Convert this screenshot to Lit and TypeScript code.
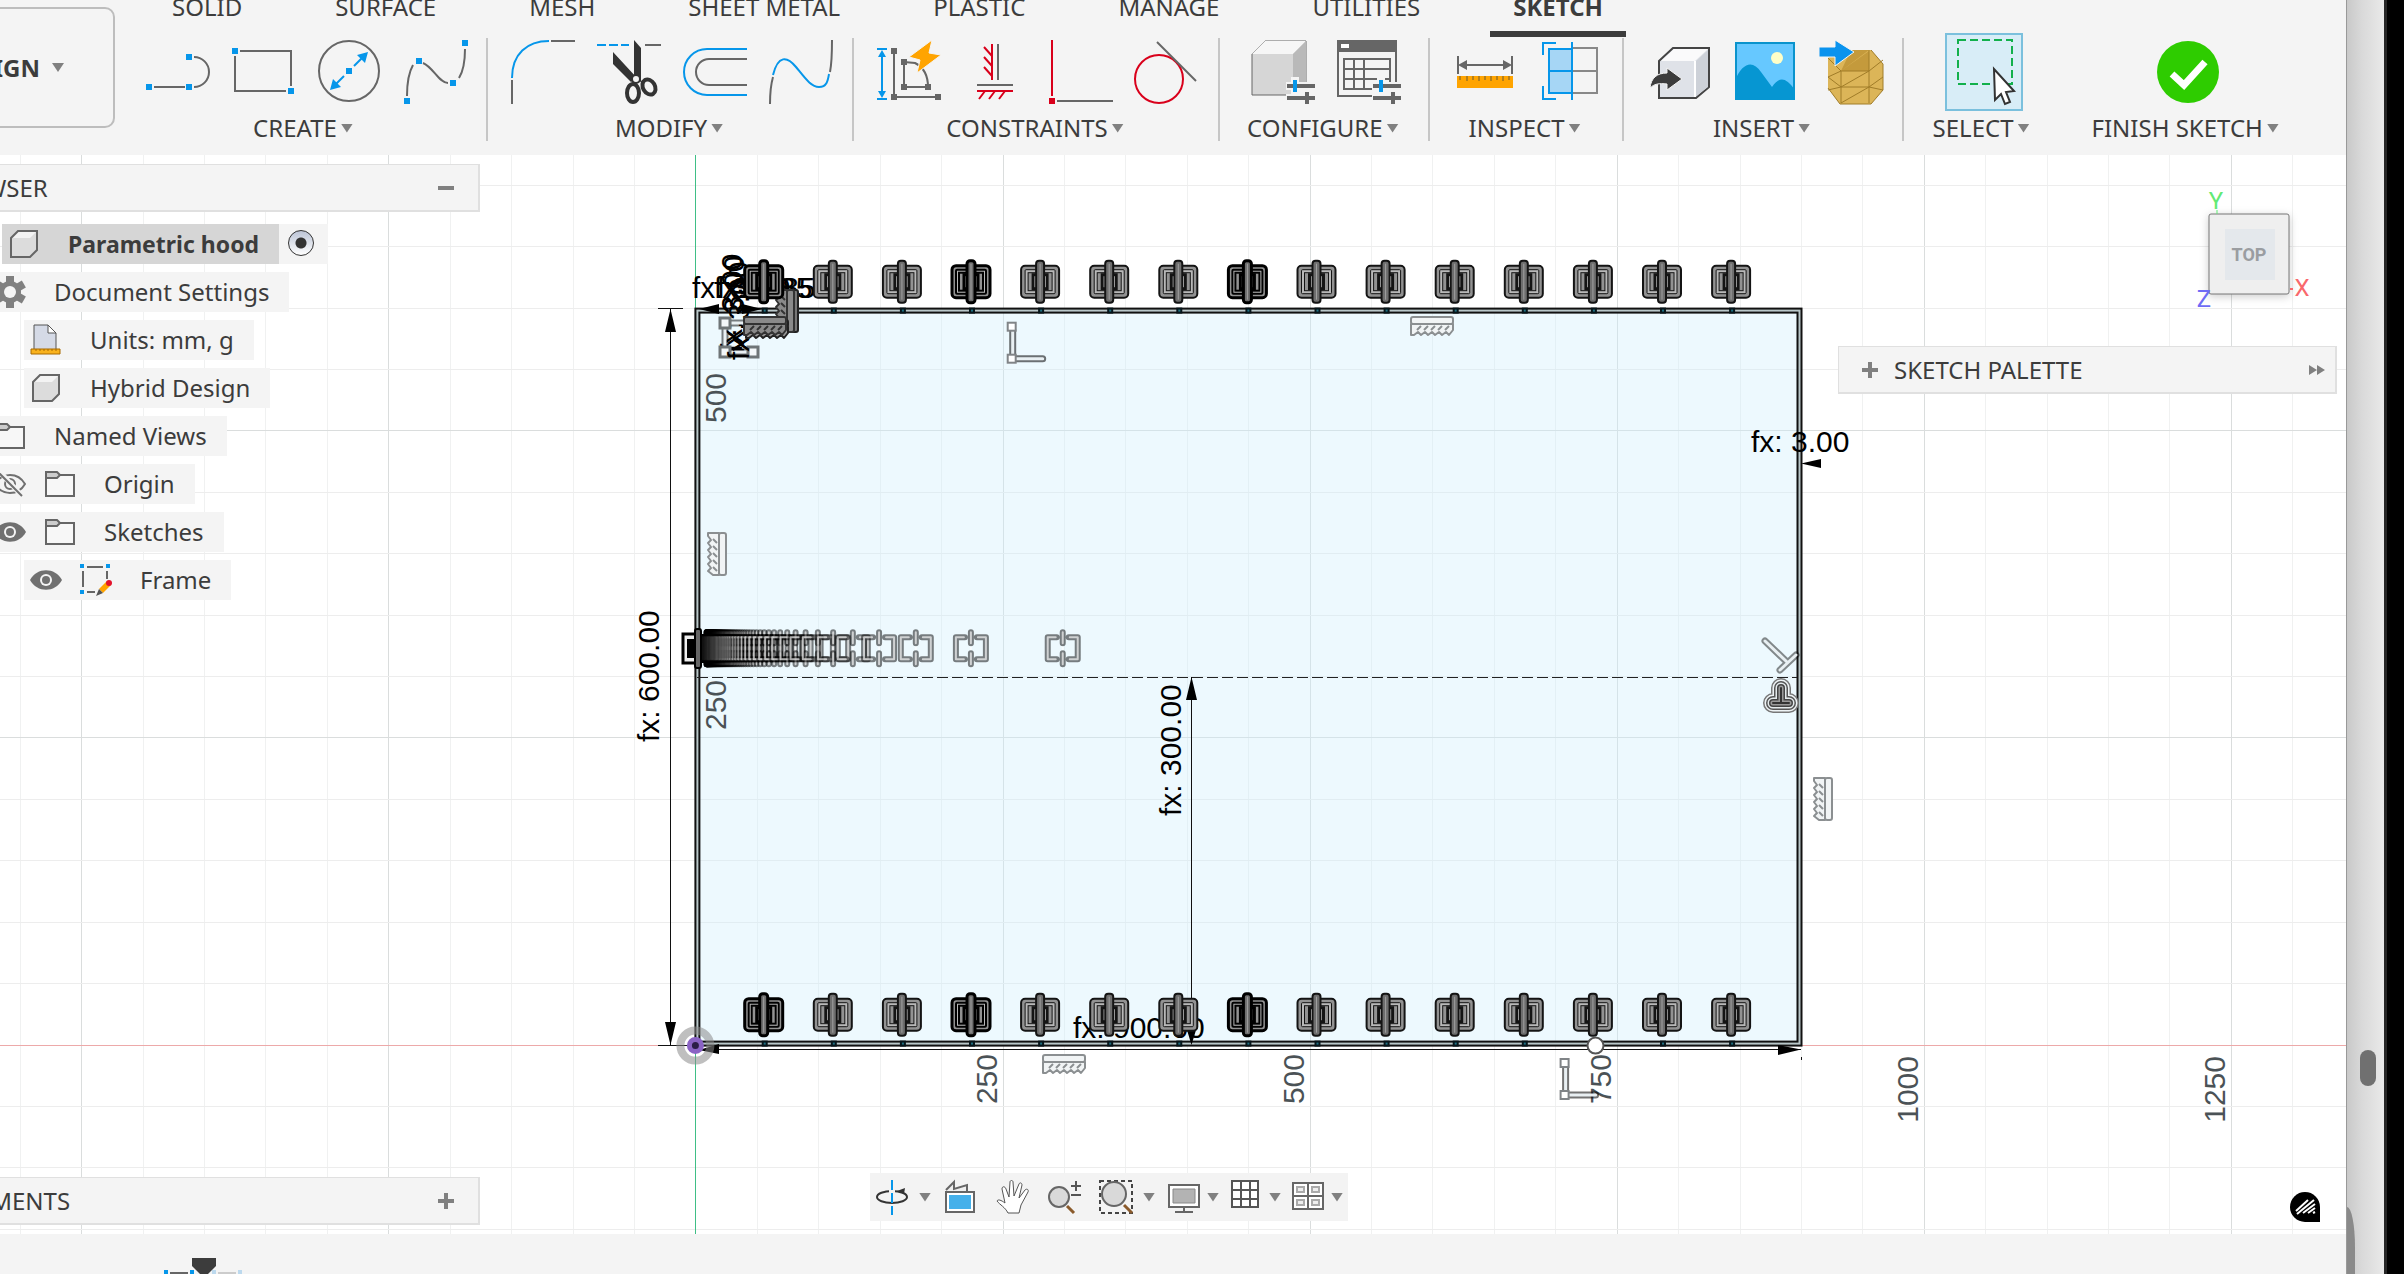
import { LitElement, html, svg, css, TemplateResult, SVGTemplateResult } from "lit";
import { customElement, property, state } from "lit/decorators.js";
import { classMap } from "lit/directives/class-map.js";

const GRAY = "#666";
const BLUE = "#0696ea";
const RED = "#d9001b";

const node = (x: number, y: number, color = BLUE, s = 6) =>
  svg`<rect x=${x - s / 2} y=${y - s / 2} width=${s} height=${s} fill=${color} />`;

const slider = (x: number, y: number) => svg`
  <path d=${`M${x - 9} ${y}h30M${x - 9} ${y + 12}h30`} stroke="#f4f4f4" stroke-width="8" />
  <path d=${`M${x} ${y - 9}v18M${x + 13} ${y + 3}v18`} stroke="#f4f4f4" stroke-width="8" />
  <path d=${`M${x - 8} ${y}h28M${x - 8} ${y + 12}h28`} stroke=${GRAY} stroke-width="4" />
  <path d=${`M${x + 12} ${y + 6}v12`} stroke=${GRAY} stroke-width="4" />
  <path d=${`M${x} ${y - 6}v12`} stroke=${BLUE} stroke-width="4" />`;

const TOOL_ICONS: Record<string, SVGTemplateResult> = {
  line: svg`<path d="M9 47H40M49 17A15 15 0 0 1 49 47" fill="none" stroke=${GRAY} stroke-width="2" />
    ${node(4, 47)}${node(44, 17)}${node(44, 47)}`,
  rectangle: svg`<path d="M9 11H60V46M55 51H4V16" fill="none" stroke=${GRAY} stroke-width="2" />
    ${node(4, 11)}${node(60, 51)}`,
  circle: svg`<circle cx="32" cy="31" r="30" fill="none" stroke=${GRAY} stroke-width="2" />
    <path d="M37 26L45 18M27 36L19 44" stroke=${BLUE} stroke-width="2" />
    <path d="M51 12L48 23L40 15ZM13 50L16 39L24 47Z" fill=${BLUE} />${node(32, 31)}`,
  spline: svg`<path d="M4 56C4 42 6 32 10 25M20 23C30 27 36 43 45 43M56 38C61 30 62 20 62 9" fill="none" stroke=${GRAY} stroke-width="2" />
    ${node(4, 61)}${node(16, 21)}${node(50, 43)}${node(62, 3)}`,
  fillet: svg`<path d="M1 38C1 14 16 1 38 1" fill="none" stroke=${BLUE} stroke-width="2" />
    <path d="M1 40V64M40 1H64" stroke=${GRAY} stroke-width="2" />`,
  trim: svg`<path d="M0 5H32" stroke=${BLUE} stroke-width="2" stroke-dasharray="9 3" />
    <path d="M48 5H64" stroke=${GRAY} stroke-width="2" />
    <path d="M37 0L44 8V42L37 38ZM16 12L40 38L34 42L16 24Z" fill="#333" />
    <ellipse cx="36" cy="53" rx="6" ry="9" fill="none" stroke="#333" stroke-width="4" />
    <ellipse cx="52" cy="47" rx="6" ry="8" fill="none" stroke="#333" stroke-width="4" transform="rotate(-30 52 47)" />
    <circle cx="39" cy="39" r="4" fill="#f4f4f4" stroke="#333" stroke-width="2" />`,
  offset: svg`<path d="M64 9H24A23 23 0 0 0 24 55H64" fill="none" stroke=${BLUE} stroke-width="2" />
    <path d="M64 19H26A13 13 0 0 0 26 45H64" fill="none" stroke=${GRAY} stroke-width="2" />`,
  blend: svg`<path d="M4 35C9 15 18 16 27 27S42 47 50 47S59 40 60 34" fill="none" stroke=${BLUE} stroke-width="2" />
    <path d="M1 64C1 52 2 44 4 37M61 32C63 22 63 12 63 0" fill="none" stroke=${GRAY} stroke-width="2" />`,
  autoConstrain: svg`<path d="M5 12V56M0 9H10M0 59H10" stroke=${BLUE} stroke-width="2" />
    <path d="M5 10L9 17H1ZM5 58L9 51H1Z" fill=${BLUE} />
    <path d="M17 11V57H60M27 22V47H51C51 36 48 28 38 23L27 22" fill="none" stroke=${GRAY} stroke-width="2" />
    ${node(17, 11, GRAY)}${node(17, 57, GRAY)}${node(61, 57, GRAY)}${node(27, 22, GRAY)}${node(27, 47, GRAY)}${node(51, 47, GRAY)}
    <path d="M55 0L32 17L43 20L40 33L64 15L52 13Z" fill="#ffa400" stroke="#f4f4f4" stroke-width="1" />`,
  horizontal: svg`<path d="M29 4V40M21 7L29 16M21 17L29 26M21 27L29 36M14 51H50M22 51L16 59M32 51L26 59M42 51L36 59" stroke=${RED} stroke-width="2" />
    <path d="M35 4V40M14 45H50" stroke=${GRAY} stroke-width="2" />`,
  coincident: svg`<path d="M3 0V56" stroke=${RED} stroke-width="2" /><path d="M8 61H64" stroke=${GRAY} stroke-width="2" />${node(3, 61, RED)}`,
  tangent: svg`<circle cx="24" cy="39" r="24" fill="none" stroke=${RED} stroke-width="2" />
    <path d="M22 2L61 41" stroke=${GRAY} stroke-width="2" />`,
  configure: svg`<path d="M1 14L14 1H55V43L42 55H1Z" fill="#d6d6d6" stroke=${GRAY} stroke-width="1" />
    <path d="M1 14L14 1H55L42 14Z" fill="#f6f6f6" /><path d="M42 14L55 1V43L42 55Z" fill="#b9b9b9" />${slider(44, 46)}`,
  configureTable: svg`<path d="M1 1H59V56H1Z" fill="#f4f4f4" stroke=${GRAY} stroke-width="2" />
    <path d="M0 0H60V12H0Z" fill=${GRAY} /><path d="M4 4H12V8H4Z" fill="#fff" />
    <path d="M7 19H53V49H7ZM7 29H53M7 39H53M17 19V49M27 19V49" fill="none" stroke=${GRAY} stroke-width="2" />${slider(44, 46)}`,
  measure: svg`<path d="M5 16V34M59 16V34M9 25H55" stroke=${GRAY} stroke-width="2" />
    <path d="M5 25L14 20V30ZM59 25L50 20V30Z" fill=${GRAY} />
    <path d="M4 36H60V48H4Z" fill="#ffa400" /><path d="M7 36V40M14 36V41M20 36V40M26 36V41M32 36V40M38 36V41M44 36V40M50 36V41M56 36V40" stroke="#6b5b30" stroke-width="1" />`,
  section: svg`<path d="M33 8H58V53H33M33 31H58" fill="none" stroke="#888" stroke-width="2" />
    <path d="M10 9H33V53H10Z" fill="#a6d6f5" stroke=${BLUE} stroke-width="2" />
    <path d="M10 31H33M33 2V60M17 3H4V15M17 59H4V46" fill="none" stroke=${BLUE} stroke-width="2" />`,
  derive: svg`<path d="M12 21L26 8H62V47L49 58H12Z" fill="#dfe2e8" stroke="#444" stroke-width="2" />
    <path d="M14 21L27 9H61L48 21Z" fill="#fafafb" /><path d="M48 22L61 10V47L48 57Z" fill="#cdd1d8" />
    <path d="M48 21V57" stroke="#fff" stroke-width="2" />
    <path d="M3 48C4 38 10 33 20 33V28L35 39L20 50V44C12 43 7 44 3 48Z" fill="#3c3c3c" stroke="#f4f4f4" stroke-width="1" />`,
  canvas: svg`<path d="M3 3H61V59H3Z" fill="#66c8ff" stroke="#0a93cc" stroke-width="2" />
    <circle cx="44" cy="18" r="6" fill="#ffffc8" /><path d="M2 40C10 22 20 20 28 32L39 47C46 37 52 36 62 50V60H2Z" fill="#0696d2" />`,
  mesh: svg`<path d="M9 18L20 10H52L64 24V50L52 64H21L9 48Z" fill="#dcb558" />
    <path d="M22 31L50 11V31Z M22 31L32 10H50Z" fill="#c49a3c" />
    <path d="M9 18L22 31H50L64 20M50 10V31L22 47M22 31V47H50L22 63M50 31V47L64 37M9 37L22 31M9 37L22 47L9 50M22 47V63M50 47V63M50 47L64 50M9 48L21 64H52L64 50V24L52 10" fill="none" stroke="#a07c28" stroke-width="1" />
    <path d="M0 7H16V0L35 12L16 26V17H0Z" fill="#0a93ee" stroke="#f4f4f4" stroke-width="1" />`,
  select: svg`<path d="M6 0H60V44H6Z" fill="none" stroke="#12b04c" stroke-width="2" stroke-dasharray="8 4" />
    <path d="M42 29L43 60L49 54L53 64L58 62L54 52L62 51Z" fill="#fff" stroke="#333" stroke-width="2" />`,
  finish: svg`<circle cx="32" cy="32" r="31" fill="#2ecc00" />
    <path d="M16 34L28 45L49 22" fill="none" stroke="#fff" stroke-width="7" />`,
};

const CUBE = svg`<path d="M3 10L10 3H29V22L22 29H3Z" fill="#dcdcdc" stroke="#666" stroke-width="2" />
  <path d="M5 10L11 4H28L22 10Z" fill="#f3f3f3" />`;
const FOLDER = svg`<path d="M2 7H30V28H2Z" fill="#f7f7f7" stroke="#666" stroke-width="2" />
  <path d="M2 4H13L16 7L13 10H2Z" fill="#ccc" stroke="#666" stroke-width="2" />`;
const EYE = svg`<path d="M0 16C7 3 25 3 32 16C25 29 7 29 0 16Z" fill="#707070" />
  <circle cx="16" cy="16" r="6" fill="#f4f4f4" /><circle cx="16" cy="16" r="4" fill="#707070" />`;

const TREE_ICONS: Record<string, SVGTemplateResult> = {
  cube: CUBE,
  folder: FOLDER,
  eye: EYE,
  eyeOff: svg`<path d="M1 16C8 4 24 4 31 16C24 28 8 28 1 16Z" fill="none" stroke="#707070" stroke-width="2" />
    <circle cx="16" cy="16" r="5" fill="none" stroke="#707070" stroke-width="2" />
    <path d="M5 3L29 29" stroke="#f4f4f4" stroke-width="5" /><path d="M4 4L28 28" stroke="#707070" stroke-width="2" />`,
  gear: svg`<g fill="#808080"><circle cx="16" cy="16" r="11" />
    ${[0, 60, 120].map((a) => svg`<rect x="12" y="0" width="8" height="32" transform=${`rotate(${a} 16 16)`} />`)}</g>
    <circle cx="16" cy="16" r="6" fill="#f4f4f4" />`,
  units: svg`<path d="M4 1H18L26 9V26H4Z" fill="#d5dae6" stroke="#555" stroke-width="1" />
    <path d="M18 1V9H26Z" fill="#fff" stroke="#555" stroke-width="1" />
    <path d="M1 25H30V30H1Z" fill="#f9b21d" stroke="#a86a00" stroke-width="1" />
    <path d="M6 25v2M10 25v2M14 25v2M18 25v2M22 25v2M26 25v2" stroke="#a86a00" />`,
  sketch: svg`<path d="M7 3H23M3 7V23M27 7V15M7 28H15" stroke="#666" stroke-width="2" />
    ${node(2, 2, BLUE, 4)}${node(28, 2, BLUE, 4)}${node(2, 28, BLUE, 4)}
    <path d="M19 25L27 17L31 21L23 29Z" fill="#ffa400" /><path d="M19 25L23 29L16 32Z" fill="#555" />
    <circle cx="29" cy="19" r="3" fill="#e3122c" />`,
};

const NAV_ICONS: Record<string, SVGTemplateResult> = {
  orbit: svg`<ellipse cx="17" cy="18" rx="15" ry="6" fill="none" stroke="#333" stroke-width="2" />
    <path d="M17 9V15" stroke="#f3f3f3" stroke-width="6" /><path d="M17 1V36" stroke=${BLUE} stroke-width="2" stroke-dasharray="10 3" />
    <path d="M22 12L30 9L29 15Z" fill="#333" />`,
  lookAt: svg`<path d="M3 11L11 3V10L24 6V12" fill="#eee" stroke="#666" stroke-width="2" />
    <path d="M3 13H31V33H3Z" fill="#fff" stroke="#666" stroke-width="2" /><path d="M6 16H28V30H6Z" fill="#45b0ea" />`,
  pan: svg`<path d="M13 34C10 28 5 26 2 22C3 20 6 21 10 24L7 10C7 7 10 7 11 10L14 18L15 3C15 1 18 1 18 3L19 17L24 5C25 3 27 4 27 6L24 19L30 11C32 9 34 11 33 13L26 26L24 34Z" fill="#fff" stroke="#555" stroke-width="1" />`,
  zoom: svg`<circle cx="12" cy="18" r="10" fill="#d9d9d9" stroke="#666" stroke-width="2" />
    <path d="M20 27L27 34" stroke="#8a5a2b" stroke-width="3" /><path d="M24 7H34M29 2V12M24 16H34" stroke="#555" stroke-width="2" />`,
  zoomWindow: svg`<path d="M1 2H33V34H1Z" fill="none" stroke="#444" stroke-width="2" stroke-dasharray="4 3" />
    <circle cx="15" cy="15" r="12" fill="#d9d9d9" stroke="#666" stroke-width="2" /><path d="M25 26L33 34" stroke="#8a5a2b" stroke-width="3" />`,
  display: svg`<path d="M2 6H32V28H2Z" fill="#fff" stroke="#666" stroke-width="2" /><path d="M6 10H28V24H6Z" fill="#b3b3b3" stroke="#888" />
    <path d="M17 28V32M8 33H26" stroke="#666" stroke-width="2" />`,
  grid: svg`<path d="M3 2H29V28H3ZM3 11H29M3 20H29M12 2V28M21 2V28" fill="#fff" stroke="#555" stroke-width="2" />`,
  viewports: svg`<path d="M2 4H32V30H2ZM2 17H32M17 4V30" fill="#fff" stroke="#666" stroke-width="2" />
    <path d="M6 8H13V13H6ZM21 8H28V13H21ZM6 21H13V26H6ZM21 21H28V26H21Z" fill="#eee" stroke="#aaa" stroke-width="2" />`,
};

/* Sketch geometry, in pixels. The drawing is scaled at 307 px per 250 mm. */
const ORIGIN = { x: 695.4, y: 1045.6 };
const MINOR = 61.42;
const TOP = 155;
const FRAME = { left: 695.4, top: 308.6, right: 1801.5, bottom: 1045.6, wall: 4 };
const LOUVERS = Array.from({ length: 15 }, (_, i) => 763.7 + i * 69.1);
const DARK_LOUVERS = [0, 3, 7];

const outlined = (d: string, o = 0.5) => svg`
  <g fill="none" stroke-linecap="round" stroke-linejoin="round">
    <path d=${d} stroke="#000" stroke-opacity=${o} stroke-width="7" />
    <path d=${d} stroke="#e9f0f3" stroke-width="3" />
  </g>`;

const symmetry = (x: number, y: number) => svg`
  <g transform=${`translate(${x} ${y})`} fill="none" stroke-linejoin="round" stroke-linecap="round">
    <path d="M-6 -11H-15V11H-6M6 -11H15V11H6M0 -16V-5M0 5V16" stroke="#000" stroke-opacity=".5" stroke-width="6" />
    <path d="M-7 -11H-15V11H-7M7 -11H15V11H7M0 -16V-5M0 5V16M0 -1V1" stroke="#fff" stroke-opacity=".65" stroke-width="2" />
  </g>`;

const louver = (x: number, y: number, dark: boolean) => {
  const edge = dark ? "#000" : "#141414";
  return svg`<g transform=${`translate(${x} ${y})`} stroke=${edge}>
    <rect x="-19" y="-16" width="38" height="32" rx="4" fill="#929292" stroke-width=${dark ? 3 : 2} />
    <rect x="-15" y="-12" width="30" height="24" rx="1" fill="#b8b8b8" stroke-width=${dark ? 2 : 1} />
    <rect x="-12" y="-9" width="24" height="18" fill="#929292" stroke-width=${dark ? 2 : 1} />
    <rect x="-7" y="-7" width="14" height="14" fill="#fff" stroke-width="3" />
    <rect x="-4" y="-21" width="8" height="42" rx="3" fill="#6e6e6e" stroke-width=${dark ? 3 : 2} />
    <path d="M0 -18V18" stroke="#a0a0a0" stroke-width="1" />
  </g>`;
};

const hatch = (x: number, y: number, angle = 0, color = "#8b8f91", fill = "#f1f4f5") => svg`
  <g transform=${`translate(${x} ${y}) rotate(${angle})`} fill=${fill} stroke=${color} stroke-width="2" stroke-linejoin="round">
    <rect x="-21" y="-9" width="42" height="7" rx="2" />
    <path d="M-21 -2H21V4L17 9L14 6L10 9L7 6L3 9L0 6L-4 9L-7 6L-11 9L-14 6L-18 9L-21 9Z" />
    <path d="M-15 4L-11 0M-8 4L-4 0M-1 4L3 0M6 4L10 0M13 4L17 0" />
  </g>`;

const joint = (x: number, y: number) => svg`
  ${outlined(`M${x + 1} ${y + 3}V${y + 32}M${x} ${y + 32}H${x + 31}`, 0.55)}
  <rect x=${x - 4} y=${y - 4} width="8" height="8" fill="#fff" stroke="#808487" stroke-width="2" />
  <rect x=${x - 4} y=${y + 28} width="8" height="8" fill="#fff" stroke="#808487" stroke-width="2" />`;

const vtext = (label: string, x: number, y: number, cls = "dim", anchor = "start") =>
  svg`<text class=${cls} text-anchor=${anchor} transform=${`translate(${x} ${y}) rotate(-90)`}>${label}</text>`;

const shared = css`
  *, *::before, *::after { box-sizing: border-box; }
  button {
    font: inherit;
    color: inherit;
    background: none;
    border: 0;
    padding: 0;
    margin: 0;
    cursor: pointer;
  }
  svg { display: block; overflow: visible; }
  .caret {
    width: 12px;
    height: 9px;
    background: #808080;
    clip-path: polygon(0 0, 100% 0, 50% 100%);
  }
`;

type Tool = { id: string; label: string };
type Group = { name: string; tools: Tool[] };

const GROUPS: Group[] = [
  { name: "CREATE", tools: [{ id: "line", label: "Line" }, { id: "rectangle", label: "Rectangle" }, { id: "circle", label: "Circle" }, { id: "spline", label: "Spline" }] },
  { name: "MODIFY", tools: [{ id: "fillet", label: "Fillet" }, { id: "trim", label: "Trim" }, { id: "offset", label: "Offset" }, { id: "blend", label: "Blend curve" }] },
  { name: "CONSTRAINTS", tools: [{ id: "autoConstrain", label: "Auto constrain" }, { id: "horizontal", label: "Horizontal/Vertical" }, { id: "coincident", label: "Coincident" }, { id: "tangent", label: "Tangent" }] },
  { name: "CONFIGURE", tools: [{ id: "configure", label: "Configure model" }, { id: "configureTable", label: "Configuration table" }] },
  { name: "INSPECT", tools: [{ id: "measure", label: "Measure" }, { id: "section", label: "Section analysis" }] },
  { name: "INSERT", tools: [{ id: "derive", label: "Derive" }, { id: "canvas", label: "Canvas" }, { id: "mesh", label: "Insert mesh" }] },
  { name: "SELECT", tools: [{ id: "select", label: "Select" }] },
  { name: "FINISH SKETCH", tools: [{ id: "finish", label: "Finish sketch" }] },
];

const TABS = ["SOLID", "SURFACE", "MESH", "SHEET METAL", "PLASTIC", "MANAGE", "UTILITIES", "SKETCH"];

@customElement("ribbon-bar")
export class RibbonBar extends LitElement {
  @state() private tab = "SKETCH";
  @state() private tool = "select";

  static styles = [shared, css`
    :host {
      display: grid;
      grid-template-columns: 122px 1fr;
      height: 155px;
      flex: none;
      overflow: hidden;
      background: #f4f4f4;
      color: #3c3c3c;
      font: 24px/28px "Noto Sans", sans-serif;
      white-space: nowrap;
    }
    .workspace {
      display: flex;
      align-items: center;
      justify-content: flex-end;
      gap: 12px;
      height: 121px;
      margin: 7px 7px 0 -100px;
      padding-right: 49px;
      border: 2px solid #bdbdbd;
      border-radius: 10px;
      font-weight: 700;
    }
    .tabs { display: flex; gap: 47px; padding-left: 27px; height: 37px; margin: 0; }
    .tab {
      height: 46px;
      margin-top: -9px;
      padding: 0 23px 8px;
      line-height: 32px;
      border-bottom: 6px solid transparent;
    }
    .tab.active { font-weight: 700; border-color: #3c3c3c; }
    .ribbon { display: flex; padding-top: 1px; }
    .group {
      display: flex;
      flex-direction: column;
      align-items: center;
      gap: 10px;
      height: 103px;
      padding: 2px 19px 0 23px;
      border-right: 2px solid #c6c6c6;
    }
    .group.open { border-color: transparent; padding: 2px 21px 0 25px; }
    .tools { display: flex; gap: 22px; height: 64px; }
    .tool { width: 64px; height: 64px; }
    .tool.active {
      width: 78px;
      height: 78px;
      margin: -7px;
      padding: 5px;
      background: #d8edf7;
      border: 2px solid #7bc0dd;
    }
    .label { display: flex; align-items: center; gap: 4px; padding: 0 10px 0 4px; }
  `];

  render() {
    return html`
      <button class="workspace">DESIGN <span class="caret"></span></button>
      <div>
        <nav class="tabs" aria-label="Toolbar tabs">
          ${TABS.map((t) => html`<button class=${classMap({ tab: true, active: t === this.tab })} @click=${() => (this.tab = t)}>${t}</button>`)}
        </nav>
        <div class="ribbon">
          ${GROUPS.map((g, i) => html`
            <section class=${classMap({ group: true, open: i >= GROUPS.length - 2 })}>
              <div class="tools">
                ${g.tools.map((t) => html`
                  <button class=${classMap({ tool: true, active: t.id === this.tool })} aria-label=${t.label} @click=${() => (this.tool = t.id)}>
                    <svg width="64" height="64" viewBox="0 0 64 64">${TOOL_ICONS[t.id]}</svg>
                  </button>`)}
              </div>
              <button class="label">${g.name}<span class="caret"></span></button>
            </section>`)}
        </div>
      </div>`;
  }
}

type Row = { label: string; icons: string[]; depth: "top" | "root" | "child" };

const ROWS: Row[] = [
  { label: "Document Settings", icons: ["gear"], depth: "root" },
  { label: "Units: mm, g", icons: ["units"], depth: "child" },
  { label: "Hybrid Design", icons: ["cube"], depth: "child" },
  { label: "Named Views", icons: ["folder"], depth: "root" },
  { label: "Origin", icons: ["eyeOff", "folder"], depth: "root" },
  { label: "Sketches", icons: ["eye", "folder"], depth: "root" },
  { label: "Frame", icons: ["eye", "sketch"], depth: "child" },
];

@customElement("browser-tree")
export class BrowserTree extends LitElement {
  static styles = [shared, css`
    :host {
      display: block;
      color: #3c3c3c;
      font: 24px/40px "Noto Sans", sans-serif;
      white-space: nowrap;
    }
    ul { list-style: none; display: flex; flex-direction: column; align-items: flex-start; gap: 8px; margin: 0; padding: 0; }
    .row { display: flex; height: 40px; background: #f4f4f4; }
    .root { margin-left: -12px; }
    .child { margin-left: 24px; }
    .top { margin-left: 2px; }
    .item { display: flex; align-items: center; gap: 18px; padding: 0 20px 0 6px; }
    .text { margin-left: 10px; }
    .top .item { background: #d6d6d6; font-weight: 700; font-size: 23px; }
    .radio {
      appearance: none;
      width: 26px;
      height: 26px;
      margin: 6px 14px 8px 9px;
      border: 1px solid #333;
      border-radius: 50%;
      background: radial-gradient(circle, #333 0 5px, transparent 6px), linear-gradient(#bcc4d6, #fff);
    }
  `];

  private icon(id: string): TemplateResult {
    return html`<svg width="32" height="32" viewBox="0 0 32 32" aria-hidden="true">${TREE_ICONS[id]}</svg>`;
  }

  render() {
    return html`<ul>
      <li class="row top">
        <button class="item">${this.icon("cube")}<span class="text">Parametric hood</span></button>
        <input class="radio" type="radio" checked aria-label="Activate Parametric hood" />
      </li>
      ${ROWS.map((r) => html`
        <li class="row ${r.depth}">
          <button class="item">${r.icons.map((i) => this.icon(i))}<span class="text">${r.label}</span></button>
        </li>`)}
    </ul>`;
  }
}

@customElement("panel-header")
export class PanelHeader extends LitElement {
  @property() label = "";
  @property() sign = "plus";
  @property({ type: Boolean }) docked = false;

  static styles = [shared, css`
    :host {
      display: flex;
      align-items: center;
      height: 48px;
      background: #f4f4f4;
      border: solid #e0e0e0;
      border-width: 1px 2px 2px 1px;
      color: #3c3c3c;
      font: 24px/32px "Noto Sans", sans-serif;
      white-space: nowrap;
    }
    .title { flex: 1; }
    .sign { width: 16px; height: 16px; margin: 0 24px; }
    .docked { margin: 0 16px 0 23px; }
    .more { margin-right: 10px; }
  `];

  render() {
    const sign = html`<button class=${classMap({ sign: true, docked: this.docked })} aria-label="Toggle ${this.label}">
      <svg width="16" height="16"><path d=${this.sign === "plus" ? "M0 8H16M8 0V16" : "M0 8H16"} stroke="#808080" stroke-width="4" /></svg>
    </button>`;
    return this.docked
      ? html`${sign}<span class="title">${this.label}</span>
          <button class="more" aria-label="Collapse"><svg width="16" height="12"><path d="M0 1L8 6L0 11ZM8 1L16 6L8 11Z" fill="#808080" /></svg></button>`
      : html`<span class="title">${this.label}</span>${sign}`;
  }
}

@customElement("navigation-bar")
export class NavigationBar extends LitElement {
  static styles = [shared, css`
    :host { display: flex; gap: 12px; height: 48px; padding: 0 5px; background: #f3f3f3; align-items: center; }
    .set { display: flex; gap: 18px; align-items: center; }
    .set.views { gap: 10px; }
    .nav { display: flex; align-items: center; gap: 10px; height: 36px; }
    .views .nav { gap: 6px; }
    .nav.narrow { margin-right: -6px; }
  `];

  private button(id: string, label: string, menu = false) {
    return html`<button class=${classMap({ nav: true, narrow: id === "orbit" })} aria-label=${label}>
      <svg width="34" height="36" viewBox="0 0 34 36">${NAV_ICONS[id]}</svg>
      ${menu ? html`<span class="caret"></span>` : ""}
    </button>`;
  }

  render() {
    return html`
      <div class="set">
        ${this.button("orbit", "Orbit", true)}${this.button("lookAt", "Look at")}${this.button("pan", "Pan")}
        ${this.button("zoom", "Zoom")}${this.button("zoomWindow", "Zoom window", true)}
      </div>
      <div class="set views">
        ${this.button("display", "Display settings", true)}${this.button("grid", "Grid and snaps", true)}${this.button("viewports", "Viewports", true)}
      </div>`;
  }
}

@customElement("sketch-canvas")
export class SketchCanvas extends LitElement {
  static styles = css`
    :host { display: block; overflow: hidden; background: #fff; }
    svg { display: block; width: 100%; height: 100%; }
    text { font: 30px "Liberation Sans", sans-serif; }
    .dim { fill: #000; }
    .axis { fill: #4b5256; }
  `;

  private grid() {
    const lines: SVGTemplateResult[] = [];
    for (let i = -11; i <= 50; i++) {
      const x = Math.round(ORIGIN.x + i * MINOR) + 0.5;
      lines.push(svg`<line x1=${x} x2=${x} y1="0" y2="3000" stroke=${i % 5 === 0 ? "#dadddd" : "#f0f1f1"} />`);
    }
    for (let i = -16; i <= 14; i++) {
      const y = Math.round(ORIGIN.y + i * MINOR) - 0.5;
      lines.push(svg`<line x1="0" x2="100%" y1=${y} y2=${y} stroke=${i % 5 === 0 ? "#dadddd" : "#ededed"} />`);
    }
    return lines;
  }

  render() {
    const f = FRAME;
    const series = Array.from({ length: 98 }, (_, i) => 100 - i).map((k) => ORIGIN.x + 1102 / k);
    return html`<svg role="img" aria-label="Sketch">
      <g transform=${`translate(0 ${-TOP})`}>
        ${this.grid()}
        <line x1="0" x2="100%" y1="1045.5" y2="1045.5" stroke="#eda9a9" />
        <line x1="695.5" x2="695.5" y1="0" y2="3000" stroke="#3fbf86" />
        <rect x=${f.left} y=${f.top} width=${f.right - f.left} height=${f.bottom - f.top} fill="#cdeefc" fill-opacity=".36" />

        ${vtext("500", 726, 423, "axis")}${vtext("250", 726, 730, "axis")}
        ${["250", "500", "750"].map((t, i) => vtext(t, 996.5 + i * 307.1, 1054, "axis", "end"))}
        ${["1000", "1250"].map((t, i) => vtext(t, 1917.8 + i * 307.1, 1056, "axis", "end"))}

        <g fill="none" stroke="#111">
          <rect x=${f.left + 2} y=${f.top + 2} width=${f.right - f.left - 4} height=${f.bottom - f.top - 4} stroke="#b9c7c9" stroke-width="4" />
          <rect x=${f.left} y=${f.top} width=${f.right - f.left} height=${f.bottom - f.top} stroke-width="2" />
          <rect x=${f.left + f.wall} y=${f.top + f.wall} width=${f.right - f.left - 2 * f.wall} height=${f.bottom - f.top - 2 * f.wall} stroke-width="2" />
          <line x1="697" x2="1797" y1="677.5" y2="677.5" stroke="#222" stroke-dasharray="11 4" />
        </g>

        <g stroke="#111" fill="#000">
          <path d="M670.5 308V1045M658 308.5H683M658 1045.5H690M1191.5 677V1043M697 1049.5H1801" />
          <g stroke="none">
            <path d="M670.5 309L676 332H665ZM670.5 1045L676 1022H665ZM1191.5 677L1197 700H1186ZM1191.5 1045L1196 1030H1187Z" />
            <path d="M699 1050L719 1044V1054ZM1801 1049.5L1778 1045V1055ZM1801 463.5L1821 459V468ZM699 309L719 304V314ZM762 309L742 304V314Z" />
          </g>
          <path d="M1801.5 1057V1060" />
        </g>
        <text class="dim" x="1751" y="452">fx: 3.00</text>
        <text class="dim" x="1073" y="1038">fx: 900.00</text>
        <text class="dim" x="692" y="298">fx: 3.00</text>
        <text class="dim" x="714" y="298">fx: 2.85</text>
        <text class="dim" x="717" y="298">fx: 2.85</text>
        ${vtext("fx: 600.00", 659, 742)}${vtext("fx: 300.00", 1181, 816)}
        ${vtext("fx: 3.00", 742, 352)}${vtext("fx: 3.00", 744, 354)}${vtext("fx: 3.00", 749, 360)}

        ${[308.6, 1041.6].map((y) => LOUVERS.map((x) => svg`<rect x=${x - 1} y=${y} width="4" height="4" fill="#1f6f80" stroke="#07151a" stroke-width="2" />`))}
        ${outlined("M725 352V323H753M725 352H753", 0.5)}
        ${[[725, 323], [725, 352], [753, 352]].map(([x, y]) => svg`<rect x=${x - 5} y=${y - 5} width="10" height="10" fill="#f4f8fa" stroke="#6f7577" stroke-width="3" />`)}
        ${vtext("fx", 749, 360)}
        ${hatch(789, 311, 90, "#222", "#777")}${hatch(785, 311, 90, "#333", "#8a8a8a")}
        ${hatch(767, 329, 0, "#222", "#999")}${hatch(765, 326, 0, "#333", "#8a8a8a")}
        ${LOUVERS.map((x, i) => louver(x, 281.7, DARK_LOUVERS.includes(i)))}
        ${LOUVERS.map((x, i) => louver(x, 1014.7, DARK_LOUVERS.includes(i)))}

        ${series.map((x) => symmetry(x, 648.3))}
        <path d="M683 634H696V663H683Z" fill="#eee" stroke="#000" stroke-width="3" />
        <path d="M687 639H699V658H687Z" fill="#000" />
        <rect x="695" y="629" width="6" height="39" rx="2" fill="#666" stroke="#000" stroke-width="2" />

        ${joint(1011.7, 326.7)}${joint(1564.6, 1063)}
        ${hatch(1432, 326)}${hatch(1064, 1064)}${hatch(717, 554, 90)}${hatch(1823, 799, 90)}
        ${outlined("M1765 641L1787 662M1780 670L1796 655", 0.45)}
        <g fill="none" stroke-linecap="round" stroke-linejoin="round">
          ${[[20, "#777"], [17, "#eef3f5"], [14, "#555"], [11, "#e4eaec"], [8, "#444"], [5, "#999"], [2, "#333"]].map(([w, c]) => svg`
            <path d="M1781 688V703M1773 703H1789" stroke=${c} stroke-width=${w} />`)}
        </g>

        <circle cx=${ORIGIN.x} cy=${ORIGIN.y} r="15" fill="none" stroke="#8b8b8b" stroke-opacity=".55" stroke-width="8" />
        <circle cx=${ORIGIN.x} cy=${ORIGIN.y} r="6" fill="#2b1d47" stroke="#8a63c4" stroke-width="5" />
        <circle cx="1595.5" cy="1045.6" r="8" fill="#fff" stroke="#555" stroke-width="2" />
      </g>
    </svg>`;
  }
}

@customElement("view-cube")
export class ViewCube extends LitElement {
  static styles = [shared, css`
    :host { display: block; width: 118px; height: 122px; }
    text { font: 24px "Liberation Sans Narrow", "Roboto", sans-serif; }
    .face { font-weight: 700; font-size: 18px; font-family: "Roboto", sans-serif; fill: #9a9da1; }
    .shade { filter: drop-shadow(0 2px 4px rgb(0 0 0 / 0.2)); }
  `];

  render() {
    return html`<svg width="118" height="122" role="img" aria-label="View cube">
      <rect class="shade" x="13" y="26" width="80" height="80" rx="2" fill="#efefef" stroke="#777" />
      <rect x="29" y="41" width="50" height="51" fill="#e4e8ec" />
      <text class="face" x="53" y="73" text-anchor="middle">TOP</text>
      <text x="20" y="21" text-anchor="middle" fill="#62ea74">Y</text>
      <path d="M21 22V26" stroke="#62ea74" />
      <text x="106" y="108" text-anchor="middle" fill="#f9686c">X</text>
      <path d="M94 101H97" stroke="#f9686c" stroke-width="2" />
      <text x="8" y="119" text-anchor="middle" fill="#6f6cf5">Z</text>
    </svg>`;
  }
}

@customElement("app-root")
export class AppRoot extends LitElement {
  static styles = [shared, css`
    :host { display: flex; height: 100vh; overflow: hidden; background: #000; }
    .app { flex: 1; min-width: 0; display: flex; flex-direction: column; }
    .stage { flex: 1; min-height: 0; display: grid; }
    .stage > * { grid-area: 1 / 1; min-width: 0; min-height: 0; }
    .overlay { position: relative; display: flex; flex-direction: column; justify-content: space-between; padding: 9px 9px 0 0; }
    .upper, .lower { display: flex; justify-content: space-between; }
    .side { width: 480px; display: flex; flex-direction: column; gap: 12px; }
    .side panel-header, .comments { margin-left: -66px; }
    .comments { width: 546px; }
    .right { width: 499px; display: flex; flex-direction: column; gap: 36px; padding-top: 24px; }
    .right view-cube { align-self: flex-end; margin-right: 23px; }
    .lower { justify-content: flex-start; align-items: flex-end; padding-bottom: 9px; }
    .lower navigation-bar { margin: 0 auto 4px 390px; }
    .assistant { width: 30px; height: 30px; margin: 0 17px 3px 0; }
    .timeline { height: 40px; flex: none; background: #f4f4f4; padding: 24px 0 0 162px; overflow: hidden; }
    .edge {
      width: 38px;
      flex: none;
      display: flex;
      flex-direction: column;
      align-items: center;
      justify-content: flex-end;
      background: linear-gradient(90deg, #c9c9c9, #d9d9d9 40%, #e9e9e9);
      border-left: 1px solid #999;
    }
    .thumb { width: 16px; height: 36px; border-radius: 8px; background: #707070; margin: 0 0 121px 4px; }
    .corner { align-self: flex-start; width: 8px; height: 67px; border-radius: 0 8px 0 0 / 0 40px 0 0; background: #8a8a8a; }
    .bezel { width: 20px; flex: none; background: #000; border-left: 3px solid #262626; }
  `];

  render() {
    return html`
      <main class="app">
        <ribbon-bar></ribbon-bar>
        <div class="stage">
          <sketch-canvas></sketch-canvas>
          <div class="overlay">
            <div class="upper">
              <div class="side">
                <panel-header label="BROWSER" sign="minus"></panel-header>
                <browser-tree></browser-tree>
              </div>
              <div class="right">
                <view-cube></view-cube>
                <panel-header label="SKETCH PALETTE" docked></panel-header>
              </div>
            </div>
            <div class="lower">
              <panel-header class="comments" label="COMMENTS"></panel-header>
              <navigation-bar></navigation-bar>
              <button class="assistant" aria-label="Assistant">
                <svg width="30" height="30"><path d="M15 0A15 15 0 0 1 30 15V30H15A15 15 0 0 1 15 0Z" fill="#000" />
                  <path d="M6 19L18 8M7 22L24 8M13 21L25 12M18 21L25 16M23 21L25 20" stroke="#fff" stroke-width="2" /></svg>
              </button>
            </div>
          </div>
        </div>
        <div class="timeline">
          <svg width="90" height="16" aria-hidden="true">
            <path d="M30 0H54V8L46 16H38L30 8Z" fill="#3c3c3c" />
            <path d="M2 12H6V16H2ZM28 12H32V16H28Z" fill=${BLUE} /><path d="M8 14H26V16H8Z" fill="#666" />
            <path d="M50 12H54V16H50ZM76 12H80V16H76Z" fill="#bcd9ee" /><path d="M56 14H74V16H56Z" fill="#ccc" />
          </svg>
        </div>
      </main>
      <aside class="edge"><div class="thumb"></div><div class="corner"></div></aside>
      <div class="bezel"></div>`;
  }
}
